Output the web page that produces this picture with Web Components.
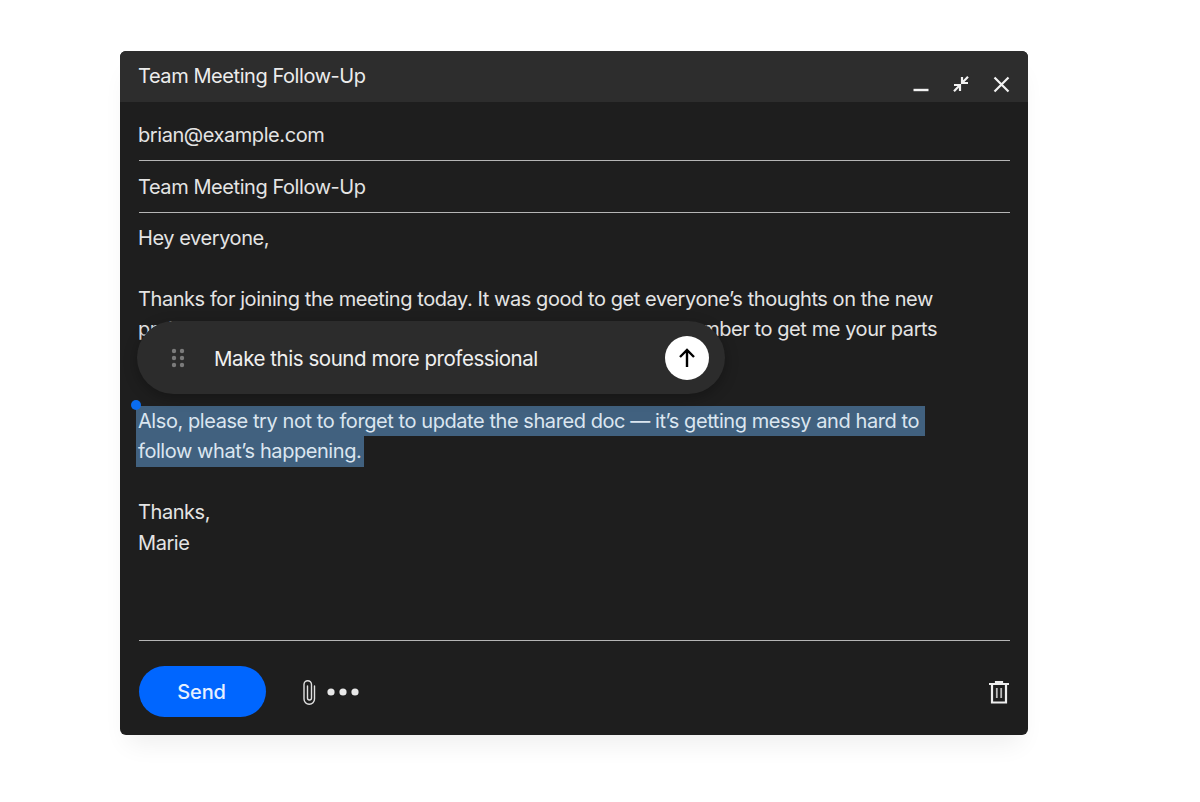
<!DOCTYPE html>
<html>
<head>
<meta charset="utf-8">
<title>Compose</title>
<style>
    html, body { margin: 0; background: #fff; }
    body { font-family: Inter, "Liberation Sans", sans-serif; padding: 51px 0 0 120px; height: 751px; overflow: hidden; }
</style>
</head>
<body>
<email-compose>
    <compose-header slot="header">Team Meeting Follow-Up</compose-header>
    <compose-field>brian@example.com</compose-field>
    <compose-field>Team Meeting Follow-Up</compose-field>
    <compose-body>
        <p>Hey everyone,</p>
        <p>Thanks for joining the meeting today. It was good to get everyone’s thoughts on the new<br>project timeline, and I think we are in great shape. Please remember to get me your parts<br>&nbsp;</p>
        <selected-text>
            <span>Also, please try not to forget to update the shared doc — it’s getting messy and hard to</span>
            <span>follow what’s happening.</span>
        </selected-text>
        <p>Thanks,<br>Marie</p>
    </compose-body>
    <compose-footer slot="footer"></compose-footer>
    <ai-prompt slot="overlay">Make this sound more professional</ai-prompt>
</email-compose>

<script>
class EmailCompose extends HTMLElement {
    constructor() {
        super();
        this.attachShadow({mode: 'open'}).innerHTML = `
            <style>
                :host {
                    display: flex;
                    flex-direction: column;
                    position: relative;
                    width: 908px;
                    height: 684px;
                    background: #1e1e1e;
                    border-radius: 6px;
                    color: #e4e4e4;
                    box-shadow: 0 16px 24px -8px rgba(0, 0, 0, .07);
                    font-size: 20px;
                    letter-spacing: -.43px;
                }
            </style>
            <slot name="header"></slot>
            <slot></slot>
            <slot name="footer"></slot>
            <slot name="overlay"></slot>
        `;
    }
}

class ComposeHeader extends HTMLElement {
    constructor() {
        super();
        this.attachShadow({mode: 'open'}).innerHTML = `
            <style>
                :host {
                    display: flex;
                    justify-content: space-between;
                    height: 51px;
                    padding: 10px 18px 0 18px;
                    box-sizing: border-box;
                    background: #2d2d2d;
                    border-radius: 6px 6px 0 0;
                    line-height: 30px;
                    color: #ececec;
                }
                .icons { display: flex; gap: 23px; padding-top: 15px; }
                svg { width: 17px; height: 17px; display: block; fill: none; stroke: #f2f2f2; stroke-width: 2.2; }
            </style>
            <slot></slot>
            <div class="icons">
                <svg viewBox="0 0 17 17"><path d="M0.500 14h15" stroke-width="2.400"/></svg>
                <svg viewBox="0 0 17 17"><path d="M9 7 15 0.800M9 1v6h6M7 9 1 15.200M1 9h6v6"/></svg>
                <svg viewBox="0 0 17 17"><path d="M1.500 1.500 15.500 15.500M15.500 1.500 1.500 15.500"/></svg>
            </div>
        `;
    }
}

class ComposeField extends HTMLElement {
    constructor() {
        super();
        this.attachShadow({mode: 'open'}).innerHTML = `
            <style>
                :host {
                    display: block;
                    margin: 0 18px 0 19px;
                    padding: 18px 0 10px;
                    line-height: 30px;
                    text-indent: -1px;
                    border-bottom: 1px solid #b5b5b5;
                }
                :host(:nth-of-type(2)) { padding-top: 11px; }
            </style>
            <slot></slot>
        `;
    }
}

class ComposeBody extends HTMLElement {
    constructor() {
        super();
        this.attachShadow({mode: 'open'}).innerHTML = `
            <style>
                :host {
                    display: block;
                    flex: 1;
                    margin: 0 18px 0 19px;
                    padding-top: 9.700px;
                    line-height: 30.500px;
                    border-bottom: 1px solid #b5b5b5;
                }
                ::slotted(p) { margin: 0 0 30.500px -1px; white-space: nowrap; }
            </style>
            <slot></slot>
        `;
    }
}

class SelectedText extends HTMLElement {
    constructor() {
        super();
        this.attachShadow({mode: 'open'}).innerHTML = `
            <style>
                :host {
                    display: block;
                    position: relative;
                    margin: 0 0 30.500px -3px;
                    white-space: nowrap;
                }
                ::slotted(span) {
                    display: block;
                    width: fit-content;
                    padding: 0 3px 0 2px;
                    background: #41617f;
                    color: #dbe6f0;
                }
                ::slotted(span:first-child) { padding-right: 6px; }
                .handle {
                    position: absolute;
                    left: -5px;
                    top: -6px;
                    width: 10px;
                    height: 10px;
                    border-radius: 50%;
                    background: #0a6cf0;
                }
            </style>
            <div class="handle"></div>
            <slot></slot>
        `;
    }
}

class ComposeFooter extends HTMLElement {
    constructor() {
        super();
        this.attachShadow({mode: 'open'}).innerHTML = `
            <style>
                :host {
                    display: flex;
                    align-items: center;
                    height: 94px;
                    padding: 7px 18px 0 19px;
                    box-sizing: border-box;
                }
                button {
                    width: 127px;
                    height: 51px;
                    border: 0;
                    padding: 0 2px 0 0;
                    border-radius: 26px;
                    background: #0066ff;
                    color: #e6f0ff;
                    font: 500 20px Inter, "Liberation Sans", sans-serif;
                    letter-spacing: -.2px;
                }
                .clip { width: 16px; height: 26px; margin-left: 35px; fill: none; stroke: #e0e0e0; stroke-width: 1.400; stroke-linecap: round; }
                .more { width: 34px; height: 8px; margin-left: 10px; fill: #e8e8e8; }
                .trash { width: 22px; height: 24px; margin-left: auto; fill: none; stroke: #eee; stroke-width: 2.200; }
            </style>
            <button>Send</button>
            <svg class="clip" viewBox="0 0 16 26">
                <path d="M13.500 7v13a5.250 5.250 0 0 1-10.500 0V5.500a3.750 3.750 0 0 1 7.500 0V19a2 2 0 0 1-4 0V7"/>
            </svg>
            <svg class="more" viewBox="0 0 34 8">
                <circle cx="4" cy="4" r="3.600"/><circle cx="16" cy="4" r="3.600"/><circle cx="28" cy="4" r="3.600"/>
            </svg>
            <svg class="trash" viewBox="0 0 22 24">
                <path d="M1 4h20M8 4V2h6v2"/>
                <path d="M4 4v18.500h14V4"/>
                <path d="M8.800 8v10M13.200 8v10" stroke-width="1.800" stroke="#bbb"/>
            </svg>
        `;
    }
}

class AiPrompt extends HTMLElement {
    constructor() {
        super();
        this.attachShadow({mode: 'open'}).innerHTML = `
            <style>
                :host {
                    position: absolute;
                    left: 17px;
                    top: 270px;
                    width: 588px;
                    height: 73px;
                    box-sizing: border-box;
                    display: flex;
                    align-items: center;
                    padding: 0 16px 0 34px;
                    border-radius: 37px;
                    background: #2c2c2c;
                    box-shadow: 0 4px 14px rgba(0, 0, 0, .28);
                    color: #f0f0f0;
                    font-size: 20.500px;
                    letter-spacing: -.45px;
                    white-space: nowrap;
                }
                .grip { width: 14px; height: 20px; fill: #7b7b7b; margin-right: 29px; flex: none; }
                .text { flex: 1; padding-top: 1px; }
                .send {
                    width: 44px;
                    height: 44px;
                    border-radius: 50%;
                    background: #fff;
                    display: flex;
                    align-items: center;
                    justify-content: center;
                }
                .send svg { width: 18px; height: 20px; fill: none; stroke: #000; stroke-width: 2.400; }
            </style>
            <svg class="grip" viewBox="0 0 14 20">
                <circle cx="3" cy="3" r="2.200"/><circle cx="11" cy="3" r="2.200"/>
                <circle cx="3" cy="10" r="2.200"/><circle cx="11" cy="10" r="2.200"/>
                <circle cx="3" cy="17" r="2.200"/><circle cx="11" cy="17" r="2.200"/>
            </svg>
            <span class="text"><slot></slot></span>
            <div class="send">
                <svg viewBox="0 0 18 20"><path d="M9 19V2M2 9l7-7 7 7"/></svg>
            </div>
        `;
    }
}

customElements.define('email-compose', EmailCompose);
customElements.define('compose-header', ComposeHeader);
customElements.define('compose-field', ComposeField);
customElements.define('compose-body', ComposeBody);
customElements.define('selected-text', SelectedText);
customElements.define('compose-footer', ComposeFooter);
customElements.define('ai-prompt', AiPrompt);
</script>
</body>
</html>
